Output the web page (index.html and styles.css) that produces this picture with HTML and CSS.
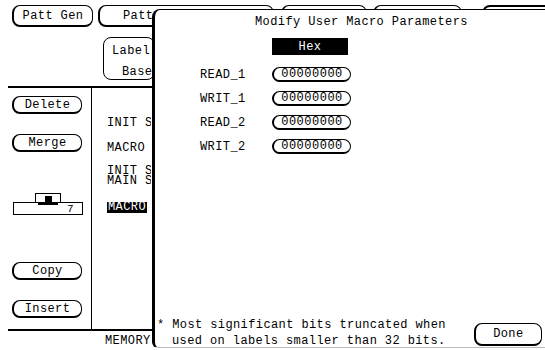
FILE: index.html
```html
<!DOCTYPE html>
<html lang="en">
<head>
    <meta charset="UTF-8">
    <title>Modify User Macro Parameters</title>
    <link rel="stylesheet" href="styles.css">
</head>
<body>
    <div class="screen">
        <div class="tabs">
            <div class="btn tab gen">Patt Gen</div>
            <div class="btn tab patt">Patt</div>
            <div class="btn tab t3"></div>
            <div class="btn tab t4"></div>
            <div class="btn tab t5"></div>
        </div>

        <div class="label-box">
            <div class="lb-top">Label</div>
            <div class="lb-bot">Base</div>
        </div>

        <div class="panel">
            <div class="side">
                <div class="btn side-btn delete">Delete</div>
                <div class="btn side-btn merge">Merge</div>
                <div class="slider">
                    <div class="slider-tab">
                        <div class="thumb-stem"></div>
                        <div class="thumb-bar"></div>
                    </div>
                    <div class="slider-base"><span class="slider-num">7</span></div>
                </div>
                <div class="btn side-btn copy">Copy</div>
                <div class="btn side-btn insert">Insert</div>
            </div>
            <div class="list">
                <div class="item first">INIT S</div>
                <div class="item">MACRO</div>
                <div class="item tight top">INIT S</div>
                <div class="item tight">MAIN S</div>
                <div class="item sel"><span>MACRO</span></div>
            </div>
        </div>

        <div class="status">MEMORY</div>
    </div>

    <!-- modal sits over the editor -->
    <div class="dialog">
        <div class="dlg-title">Modify User Macro Parameters</div>
        <div class="hex">Hex</div>

        <div class="params">
            <div class="param">
                <span class="param-name">READ_1</span>
                <span class="field">00000000</span>
            </div>
            <div class="param">
                <span class="param-name">WRIT_1</span>
                <span class="field">00000000</span>
            </div>
            <div class="param">
                <span class="param-name">READ_2</span>
                <span class="field">00000000</span>
            </div>
            <div class="param">
                <span class="param-name">WRIT_2</span>
                <span class="field">00000000</span>
            </div>
        </div>

        <div class="dlg-foot">
            <div class="note">
                <div>* Most significant bits truncated when</div>
                <div class="indent">used on labels smaller than 32 bits.</div>
            </div>
            <div class="btn done">Done</div>
        </div>
    </div>
</body>
</html>
```

FILE: styles.css
```css
body {
    margin: 0;
    width: 545px;
    height: 350px;
    overflow: hidden;
    position: relative;
    background: #ffffff;
    color: #000;
    font-family: "Liberation Mono", "DejaVu Sans Mono", monospace;
    font-size: 12px;
    letter-spacing: 0.4px;
}
.screen {
    width: 545px;
    height: 350px;
}

/* rounded HP style buttons, heavy left + bottom edge */
.btn {
    box-sizing: border-box;
    border: 1px solid #000;
    border-left-width: 2px;
    border-bottom-width: 2px;
    border-radius: 8px;
    display: flex;
    align-items: center;
    justify-content: center;
    white-space: nowrap;
    background: #fff;
}

.tabs {
    display: flex;
    padding: 5px 0 0 12px;
    height: 22px;
}
.tab {
    height: 22px;
    flex-shrink: 0;
}
.gen { width: 81px; }
.patt {
    width: 176px;
    margin-left: 5px;
    justify-content: flex-start;
    padding-left: 23px;
}
.t3 { width: 86px; margin-left: 7px; }
.t4 { width: 89px; margin-left: 6px; }
.t5 { width: 110px; margin-left: 20px; border-top-width: 2px; }

.label-box {
    box-sizing: border-box;
    margin: 10px 0 0 103px;
    width: 52px;
    height: 43px;
    border: 1px solid #000;
    border-radius: 8px;
    padding-top: 6px;
    line-height: 14px;
    overflow: hidden;
    white-space: nowrap;
}
.lb-top { padding-left: 8px; }
.lb-bot { padding-left: 18px; margin-top: 7px; }

.panel {
    display: flex;
    margin: 6px 0 0 8px;
    height: 241px;
    border-top: 2px solid #000;
    border-bottom: 2px solid #000;
}
.side {
    width: 84px;
    border-right: 1px solid #000;
    display: flex;
    flex-direction: column;
    padding-left: 4px;
    box-sizing: border-box;
}
.side-btn {
    width: 70px;
    height: 18px;
}
.delete { margin-top: 8px; }
.merge { margin-top: 20px; }
.copy { margin-top: 47px; }
.insert { margin-top: 20px; }

.slider {
    margin-top: 41px;
    width: 70px;
    height: 22px;
    display: flex;
    flex-direction: column;
    margin-left: 1px;
}
.slider-tab {
    box-sizing: border-box;
    width: 26px;
    height: 9px;
    margin-left: 22px;
    border: 1px solid #000;
    border-bottom: none;
    background: #fff;
}
.thumb-stem {
    width: 7px;
    height: 6px;
    margin: 2px auto 0;
    background: #000;
}
.thumb-bar {
    width: 20px;
    height: 3px;
    margin: 0 auto;
    background: #000;
}
.slider-base {
    box-sizing: border-box;
    height: 13px;
    border: 1px solid #000;
    display: flex;
    justify-content: flex-end;
    align-items: center;
    padding: 1px 8px 0 0;
    line-height: 11px;
    font-size: 11px;
}

.list {
    width: 59px;
    overflow: hidden;
    padding-left: 15px;
    box-sizing: border-box;
    line-height: 12px;
    white-space: nowrap;
}
.item { margin-top: 13px; }
.item.first { margin-top: 29px; }
.item.tight { line-height: 10px; margin-top: 0; }
.item.tight.top { margin-top: 12px; }
.item.sel { margin-top: 16px; line-height: 11px; }
.item.sel span {
    display: inline-block;
    line-height: 11px;
    background: #000;
    color: #fff;
    padding: 0 1px;
}

.status {
    margin: 4px 0 0 105px;
    line-height: 12px;
}

/* modal dialog */
.dialog {
    position: absolute;
    left: 152px;
    top: 9px;
    width: 420px;
    height: 339px;
    box-sizing: border-box;
    background: #fff;
    border-left: 3px solid #000;
    border-top: 1px solid #000;
    border-bottom: 1px solid #bbb;
    border-radius: 8px 0 0 6px;
    display: flex;
    flex-direction: column;
}
.dlg-title {
    margin-top: 6px;
    padding-left: 100px;
    line-height: 12px;
}
.hex {
    margin: 10px 0 0 117px;
    width: 76px;
    height: 17px;
    background: #000;
    color: #fff;
    display: flex;
    align-items: center;
    justify-content: center;
}
.params {
    display: flex;
    flex-direction: column;
    gap: 9px;
    margin-top: 12px;
}
.param {
    display: flex;
    align-items: center;
    height: 15px;
}
.param-name {
    width: 72px;
    padding-left: 45px;
}
.field {
    box-sizing: border-box;
    width: 79px;
    height: 15px;
    border: 1px solid #000;
    border-left-width: 2px;
    border-bottom-width: 2px;
    border-radius: 8px;
    display: flex;
    align-items: center;
    justify-content: center;
    letter-spacing: 0.5px;
}
.dlg-foot {
    margin-top: auto;
    display: flex;
    align-items: flex-end;
    padding-left: 2px;
}
.note {
    line-height: 16px;
    margin-bottom: -2px;
    white-space: nowrap;
}
.indent { padding-left: 15px; }
.done {
    width: 68px;
    height: 23px;
    margin-left: 28px;
    margin-bottom: 1px;
}
```
